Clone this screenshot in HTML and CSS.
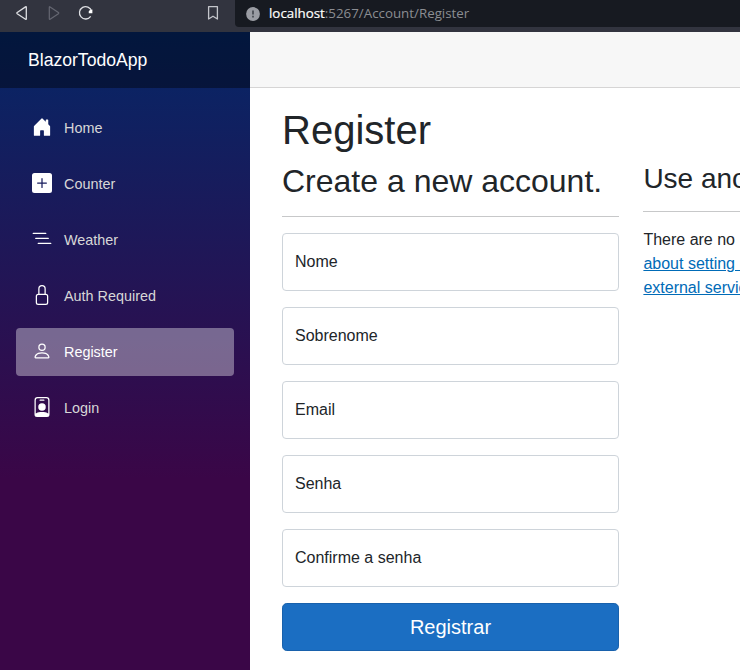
FILE: index.html
```html
<!DOCTYPE html>
<html lang="en">
<head>
<meta charset="utf-8">
<title>Register</title>
<link rel="stylesheet" href="styles.css">
</head>
<body>
<header class="browser">
  <div class="controls">
    <svg width="250" height="32" viewBox="0 0 250 32" fill="none" stroke-linejoin="round">
      <path d="M26.3 7.2v11.6q0 .8-.8.4l-8.3-5.5q-.8-.6 0-1.2l8.3-5.6q.8-.5.8.3z" stroke="#dedfe3" stroke-width="1.3"/>
      <path d="M49.3 7.2v11.6q0 .8.8.4l8.3-5.5q.8-.6 0-1.2l-8.3-5.6q-.8-.5-.8.3z" stroke="#656772" stroke-width="1.2"/>
      <path d="M91.6 11A6.2 6.2 0 1 0 90.7 16.4" stroke="#dedfe3" stroke-width="1.3"/>
      <path d="M92.4 9.4V13.2h-3.6q-.6-2 .8-2.9z" fill="#fff"/>
      <path d="M208.6 6.6h8.8v12.4l-4.4-2.8-4.4 2.8z" stroke="#c4c5cb" stroke-width="1.3"/>
    </svg>
  </div>
  <div class="address">
    <svg width="14" height="14" viewBox="0 0 14 14"><circle cx="7" cy="7" r="6.9" fill="#9a9ca3"/><path d="M6.1 3.6h1.8v4H6.1zM6.1 8.8h1.8v1.7H6.1z" fill="#4b4e56"/></svg>
    <span class="url"><b>localhost</b><span>:5267/Account/Register</span></span>
  </div>
</header>
<div class="page">
  <aside class="sidebar">
    <div class="brand">BlazorTodoApp</div>
    <nav>
      <a class="link"><svg viewBox="0 0 16 16"><path d="M6.5 14.5v-3.505c0-.245.25-.495.5-.495h2c.25 0 .5.25.5.5v3.5a.5.5 0 0 0 .5.5h4a.5.5 0 0 0 .5-.5v-7a.5.5 0 0 0-.146-.354L13 5.793V2.5a.5.5 0 0 0-.5-.5h-1a.5.5 0 0 0-.5.5v1.293L8.354 1.146a.5.5 0 0 0-.708 0l-6 6A.5.5 0 0 0 1.5 7.5v7a.5.5 0 0 0 .5.5h4a.5.5 0 0 0 .5-.5Z"/></svg>Home</a>
      <a class="link"><svg viewBox="0 0 16 16"><path d="M2 0a2 2 0 0 0-2 2v12a2 2 0 0 0 2 2h12a2 2 0 0 0 2-2V2a2 2 0 0 0-2-2H2zm6.5 4.5v3h3a.5.5 0 0 1 0 1h-3v3a.5.5 0 0 1-1 0v-3h-3a.5.5 0 0 1 0-1h3v-3a.5.5 0 0 1 1 0z"/></svg>Counter</a>
      <a class="link"><svg viewBox="0 0 16 16"><path d="M4.5 11.5A.5.5 0 0 1 5 11h10a.5.5 0 0 1 0 1H5a.5.5 0 0 1-.5-.5zm-2-4A.5.5 0 0 1 3 7h10a.5.5 0 0 1 0 1H3a.5.5 0 0 1-.5-.5zm-2-4A.5.5 0 0 1 1 3h10a.5.5 0 0 1 0 1H1a.5.5 0 0 1-.5-.5z"/></svg>Weather</a>
      <a class="link"><svg viewBox="0 0 16 16"><path d="M8 1a2 2 0 0 1 2 2v4H6V3a2 2 0 0 1 2-2zm3 6V3a3 3 0 0 0-6 0v4a2 2 0 0 0-2 2v5a2 2 0 0 0 2 2h6a2 2 0 0 0 2-2V9a2 2 0 0 0-2-2zM5 8h6a1 1 0 0 1 1 1v5a1 1 0 0 1-1 1H5a1 1 0 0 1-1-1V9a1 1 0 0 1 1-1z"/></svg>Auth Required</a>
      <a class="link active"><svg viewBox="0 0 16 16"><path d="M8 8a3 3 0 1 0 0-6 3 3 0 0 0 0 6Zm2-3a2 2 0 1 1-4 0 2 2 0 0 1 4 0Zm4 8c0 1-1 1-1 1H3s-1 0-1-1 1-4 6-4 6 3 6 4Zm-1-.004c-.001-.246-.154-.986-.832-1.664C11.516 10.68 10.289 10 8 10c-2.29 0-3.516.68-4.168 1.332-.678.678-.83 1.418-.832 1.664h10Z"/></svg>Register</a>
      <a class="link"><svg viewBox="0 0 16 16"><path d="M6.5 2a.5.5 0 0 0 0 1h3a.5.5 0 0 0 0-1h-3zM11 8a3 3 0 1 1-6 0 3 3 0 0 1 6 0z"/><path d="M4.5 0A2.5 2.5 0 0 0 2 2.5V14a2 2 0 0 0 2 2h8a2 2 0 0 0 2-2V2.5A2.5 2.5 0 0 0 11.5 0h-7zM3 2.5A1.5 1.5 0 0 1 4.5 1h7A1.5 1.5 0 0 1 13 2.5v10.795a4.2 4.2 0 0 0-.776-.492C11.392 12.387 10.063 12 8 12s-3.392.387-4.224.803a4.2 4.2 0 0 0-.776.492V2.5z"/></svg>Login</a>
    </nav>
  </aside>
  <main>
    <div class="top-row"></div>
    <article>
      <h1>Register</h1>
      <div class="row">
        <form class="account">
          <h2>Create a new account.</h2>
          <hr>
          <label class="field">Nome</label>
          <label class="field">Sobrenome</label>
          <label class="field">Email</label>
          <label class="field">Senha</label>
          <label class="field">Confirme a senha</label>
          <button type="button">Registrar</button>
        </form>
        <section class="external">
          <h3>Use another</h3>
          <hr>
          <p>There are no<br><a href="#">about setting up<br>external services</a></p>
        </section>
      </div>
    </article>
  </main>
</div>
</body>
</html>
```
FILE: styles.css
```css
* { box-sizing: border-box; }
body {
  margin: 0;
  height: 670px;
  overflow: hidden;
  font: 16px/24px "Liberation Sans", Arial, sans-serif;
  color: #212529;
  background: #fff;
}
.browser { display: flex; height: 32px; background: #32343f; }
.controls { width: 235px; overflow: hidden; }
.controls svg { display: block; }
.address {
  flex: 1;
  display: flex;
  align-items: center;
  gap: 9px;
  height: 27px;
  padding-left: 11px;
  background: #171a21;
  border-bottom-left-radius: 4px;
}
.url { margin-bottom: 2px; font: 13.33px/24px "Open Sans", "Noto Sans", sans-serif; color: #8b8d92; white-space: nowrap; }
.url b { font-weight: 400; color: #fff; -webkit-text-stroke: .2px #fff; }
.page { display: flex; height: 638px; }
.sidebar {
  flex: none;
  width: 250px;
  background: linear-gradient(180deg, #052767 0%, #3a0647 70%);
}
.brand {
  height: 56px;
  padding-left: 28px;
  background: rgba(0, 0, 0, .4);
  color: #fff;
  font-size: 17.6px;
  line-height: 56px;
}
nav { display: flex; flex-direction: column; gap: 8px; padding: 16px; }
.link {
  display: flex;
  align-items: center;
  height: 48px;
  padding-left: 16px;
  border-radius: 4px;
  color: #d7d7d7;
  font-size: 14.4px;
}
.link svg { width: 20px; height: 20px; margin: -2px 12px 0 0; fill: #fff; }
.link.active { background: rgba(255, 255, 255, .37); color: #fff; }
main { flex: 1; min-width: 0; overflow: hidden; }
.top-row { height: 56px; background: #f7f7f7; border-bottom: 1px solid #d6d5d5; }
article { padding: 17.6px 0 0 32px; }
h1, h2, h3 { margin: 0 0 8px; font-weight: 400; line-height: 1.2; white-space: nowrap; }
h1 { font-size: 40px; }
h2 { font-size: 32px; }
h3 { font-size: 28px; }
hr { margin: 16px 0; border: 0; border-top: 1px solid #c7c8c9; }
.row { display: flex; gap: 24.4px; }
.account { flex: none; width: 337px; }
.field {
  display: block;
  height: 58px;
  margin-bottom: 16px;
  padding: 16px 12px;
  border: 1px solid #ced4da;
  border-radius: 4px;
}
button {
  display: block;
  width: 100%;
  height: 48px;
  border: 1px solid #1861ac;
  border-radius: 4.8px;
  background: #1b6ec2;
  color: #fff;
  font: 20px/30px "Liberation Sans", Arial, sans-serif;
}
.external { flex: none; width: 337px; }
p { margin: 0; white-space: nowrap; }
p a { color: #006bb7; }
```
